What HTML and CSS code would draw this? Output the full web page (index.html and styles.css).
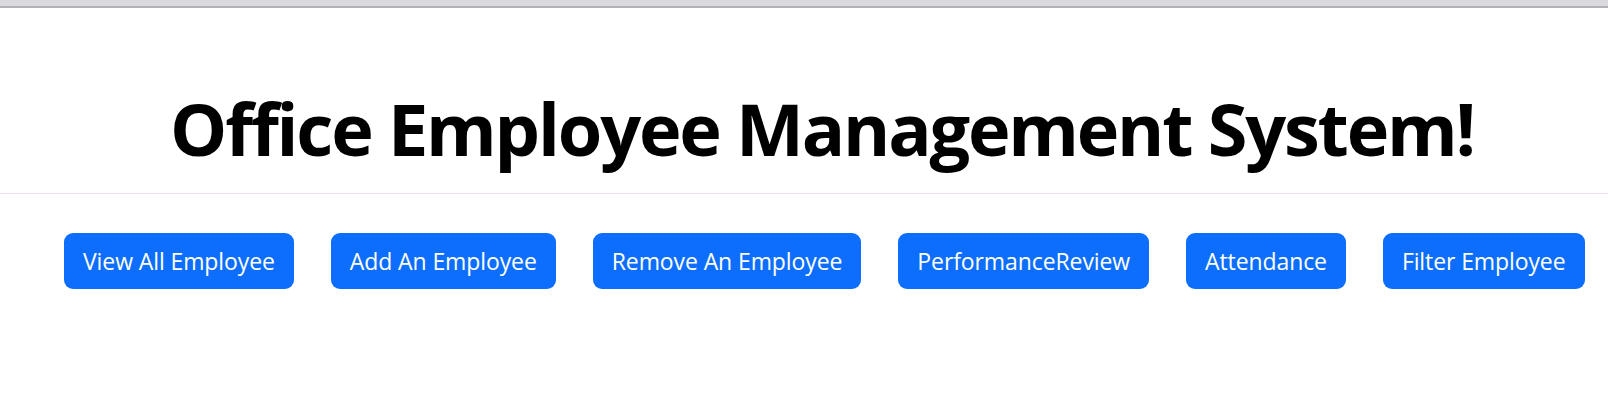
FILE: index.html
```html
<!DOCTYPE html>
<html lang="en">
<head>
<meta charset="utf-8">
<title>Office Employee Management System</title>
<link rel="stylesheet" href="styles.css">
</head>
<body>
<div class="topbar"></div>
<header class="header">
  <h1 class="title">Office Employee Management System!</h1>
</header>
<nav class="actions">
  <button class="btn">View All Employee</button>
  <button class="btn">Add An Employee</button>
  <button class="btn">Remove An Employee</button>
  <button class="btn">PerformanceReview</button>
  <button class="btn">Attendance</button>
  <button class="btn">Filter Employee</button>
</nav>
</body>
</html>
```
FILE: styles.css
```css
html, body {
  margin: 0;
  padding: 0;
  background: #ffffff;
}
body {
  font-family: "Open Sans", "Noto Sans", sans-serif;
  color: #000;
}
.topbar {
  height: 6px;
  background: #d9d9de;
  border-bottom: 2px solid #b1b1b6;
}
.header {
  padding: 77px 0 21.6px 36px;
  border-bottom: 1px solid #f1dcf1;
  text-align: center;
}
.title {
  margin: 0;
  font-size: 72px;
  line-height: 1.2;
  font-weight: 700;
  letter-spacing: -2.2px;
  white-space: nowrap;
}
.actions {
  display: flex;
  gap: 37px;
  padding: 39px 0 0 64px;
}
.btn {
  height: 56px;
  padding: 0 19px;
  border: 0;
  border-radius: 9px;
  background: #0d6efd;
  color: #fff;
  font-family: "Open Sans", "Noto Sans", sans-serif;
  font-size: 23px;
  letter-spacing: -0.1px;
  white-space: nowrap;
  cursor: pointer;
}
```
